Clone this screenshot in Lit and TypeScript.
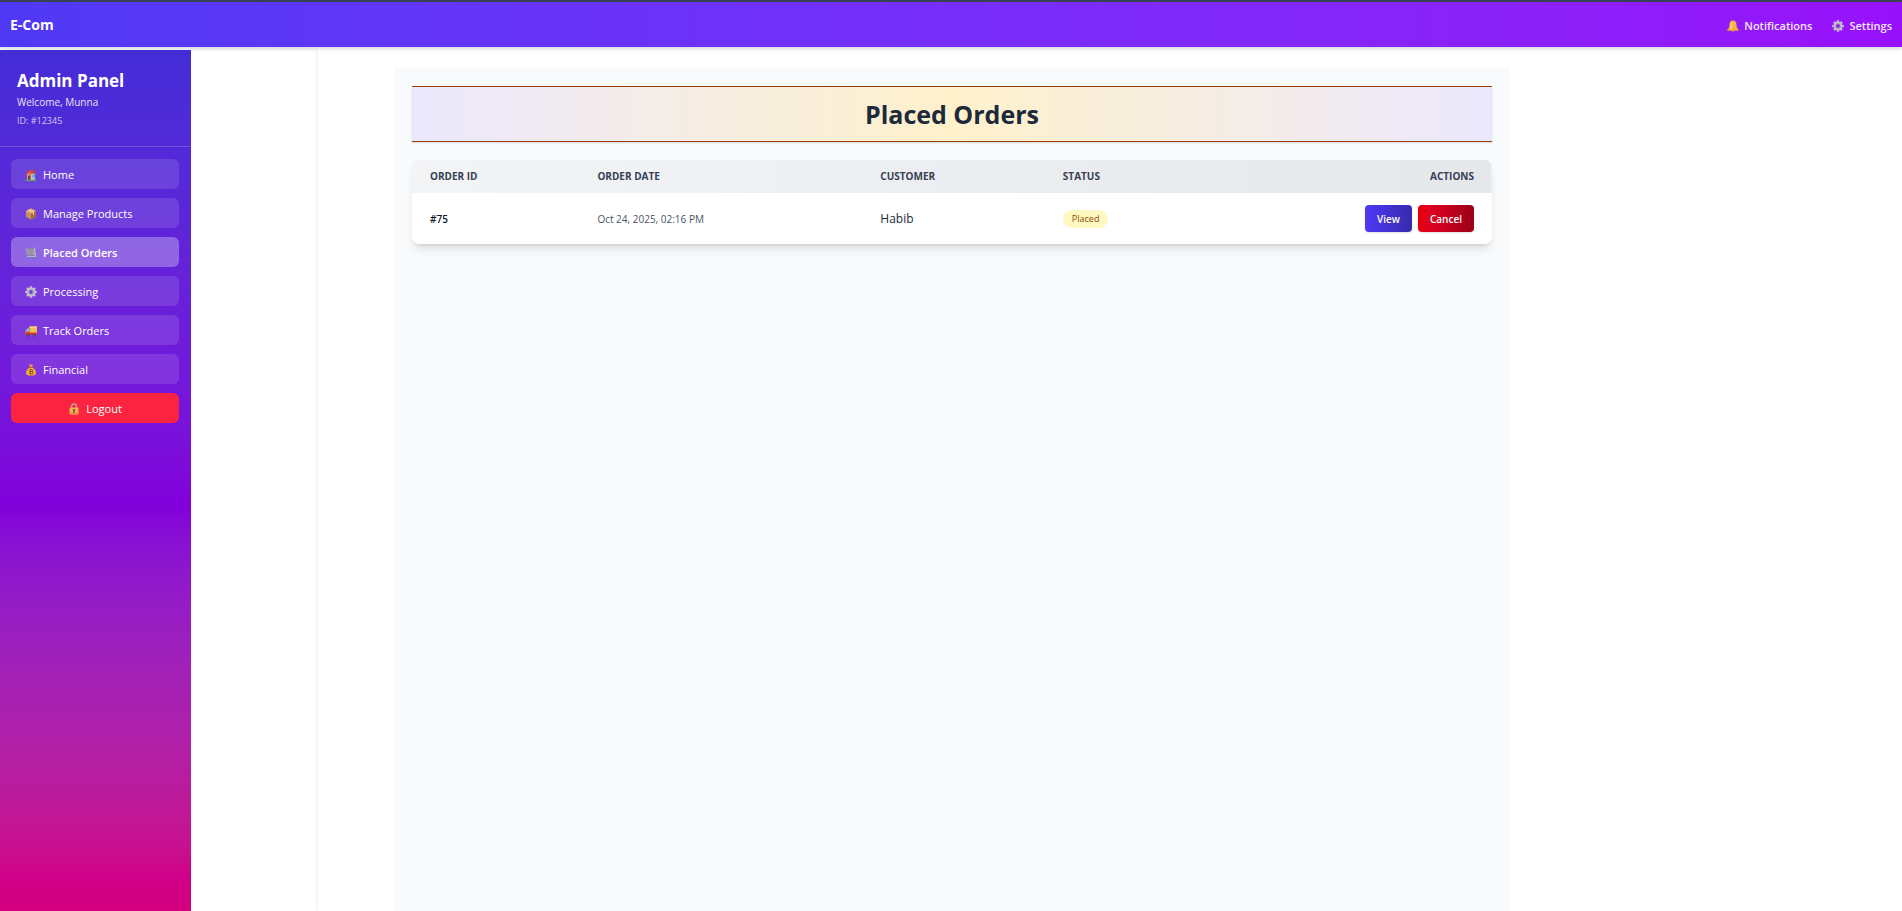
import { LitElement, html, css, svg, TemplateResult } from "lit";
import { customElement, property } from "lit/decorators.js";

const teeth = [0, 45, 90, 135, 180, 225, 270, 315];

const glyphs: Record<string, TemplateResult> = {
  home: svg`
    <rect x="1" y="21" width="22" height="3" fill="#4fb05a"/>
    <path d="M4 11 10 5l6 6v10H4z" fill="#d9a07a"/>
    <path d="M12 9h8v12h-8z" fill="#c9c3cc"/>
    <path d="M1 12 9 2l8 1 6 9-3 1-6-8-2 8-4-6-5 6z" fill="#e8472f"/>
    <rect x="16" y="1" width="3" height="5" fill="#a8472f"/>
    <rect x="6" y="13" width="5" height="8" fill="#7a4032"/>
    <rect x="14" y="11" width="6" height="6" fill="#4fb9e8"/>`,
  box: svg`
    <path d="M12 1 22 6v12l-10 5L2 18V6z" fill="#c98d5f"/>
    <path d="M12 1 22 6 12 11 2 6z" fill="#e6b285"/>
    <path d="M12 11 22 6v12l-10 5z" fill="#a66c45"/>
    <path d="m6 4 10 5v5l2-1V8L8 3z" fill="#f3d3a8"/>`,
  cart: svg`
    <path d="M1 3h18l2 14H4z" fill="#a9a0b4"/>
    <path d="M1 4h19M5 17h16M6 4v12M10 4v12M14 4v12" stroke="#877d97" stroke-width="1.6" fill="none"/>
    <path d="M23 2h-4l2 17H4" stroke="#b9b2c2" stroke-width="2.4" fill="none"/>
    <circle cx="5" cy="22" r="1.8" fill="#4b86d6"/><circle cx="20" cy="22" r="1.8" fill="#4b86d6"/>
    <circle cx="22" cy="2" r="1.8" fill="#4b86d6"/>`,
  gear: svg`
    ${teeth.map(
      (a) => svg`<rect x="9.5" y="0.5" width="5" height="6" rx="1" fill="#c3bfd0" transform="rotate(${a} 12 12)"/>`,
    )}
    <circle cx="12" cy="12" r="6.2" fill="none" stroke="#c3bfd0" stroke-width="4.6"/>
    <circle cx="12" cy="12" r="4.6" fill="none" stroke="#8f8a9e" stroke-width="1.3"/>`,
  truck: svg`
    <path d="M9 3h15v14H9z" fill="#f2bd4a"/>
    <path d="M9 3h15v3H9z" fill="#f9d477"/>
    <path d="M4 7h6v12H0v-6z" fill="#ef5a3c"/>
    <path d="M4 7h5v6H1z" fill="#6fc4f0"/>
    <path d="M0 15h24v4H0z" fill="#d8412f"/>
    <circle cx="6" cy="20" r="3" fill="#3f3248"/><circle cx="18" cy="20" r="3" fill="#3f3248"/>
    <circle cx="6" cy="20" r="1" fill="#cfc7d8"/><circle cx="18" cy="20" r="1" fill="#cfc7d8"/>`,
  money: svg`
    <path d="M8 1h8l-2 5h-4z" fill="#e9a93a"/>
    <path d="M9 7h6c4 3 7 7 7 11 0 4-3 5-10 5S2 22 2 18C2 14 5 10 9 7z" fill="#f0b040"/>
    <path d="M3 20c2 3 16 3 18 0-1 3-4 3-9 3s-8 0-9-3z" fill="#d17a2e"/>
    <rect x="7" y="5.5" width="10" height="2.4" rx="1.2" fill="#b4652a"/>
    <path d="M10 11v9M10 11h3a2 2 0 0 1 0 4h-3 3.500a2.300 2.300 0 0 1 0 5H10" stroke="#6b4018" stroke-width="1.8" fill="none"/>`,
  lock: svg`
    <path d="M7 11V7a5 5 0 0 1 10 0v4" fill="none" stroke="#b9a6a6" stroke-width="2.6"/>
    <rect x="3" y="9" width="18" height="14" rx="2" fill="#f0b052"/>
    <path d="M3 19h18v2a2 2 0 0 1-2 2H5a2 2 0 0 1-2-2z" fill="#e8894a"/>
    <circle cx="12" cy="14" r="2" fill="#5b3a3a"/><path d="M11 14h2v6h-2z" fill="#5b3a3a"/>`,
  bell: svg`
    <circle cx="12" cy="21" r="2.6" fill="#d9822f"/>
    <path d="M12 1c5 0 7 4 7 8 0 5 1 7 4 10v2H1v-2c3-3 4-5 4-10 0-4 2-8 7-8z" fill="#f7b53f"/>
    <path d="M11 3C8 4 7 7 7 11c0 3-1 6-2 8h5z" fill="#fcd36c"/>
    <path d="M1 19h22v2H1z" fill="#e8963a"/>`,
};

@customElement("emoji-icon")
class EmojiIcon extends LitElement {
  @property() name = "home";
  static styles = css`
    :host { display: inline-flex; flex: none; }
    svg { width: 12px; height: 12px; display: block; }
  `;
  render() {
    return html`<svg viewBox="0 0 24 24" aria-hidden="true">${glyphs[this.name]}</svg>`;
  }
}

const links = [
  { icon: "home", label: "Home" },
  { icon: "box", label: "Manage Products" },
  { icon: "cart", label: "Placed Orders", active: true },
  { icon: "gear", label: "Processing" },
  { icon: "truck", label: "Track Orders" },
  { icon: "money", label: "Financial" },
];

const orders = [{ id: "#75", date: "Oct 24, 2025, 02:16 PM", customer: "Habib", status: "Placed" }];

@customElement("app-root")
class AppRoot extends LitElement {
  static styles = css`
    :host {
      display: flex;
      flex-direction: column;
      min-height: 100vh;
      background: #fff;
      color: #1e2939;
      font-family: "Segoe UI", "Open Sans", "Noto Sans", sans-serif;
      font-size: 11px;
      line-height: 18px;
    }
    * { box-sizing: border-box; }
    a { color: inherit; text-decoration: none; }
    button { font: inherit; border: 0; cursor: pointer; color: #fff; }

    .topbar {
      display: flex;
      align-items: center;
      justify-content: space-between;
      height: 47px;
      padding: 0 10px;
      border-top: 2px solid #364153;
      background: linear-gradient(to right in oklab, #4f39f6, #9810fa) padding-box;
      box-shadow: 0 2px 4px rgb(0 0 0 / 0.16);
      color: #fff;
    }
    .brand { font-size: 14px; font-weight: 700; }
    .topnav { display: flex; gap: 20px; padding-top: 2px; }
    .topnav a { display: flex; align-items: center; gap: 5px; font-weight: 600; color: #f3e8ff; }

    .body { display: flex; flex: 1; padding-top: 3px; }

    .sidebar {
      flex: none;
      width: 191px;
      color: #fff;
      background: linear-gradient(
        to bottom in oklab,
        #432dd7, #8200db 50%, #b81c9f 80%, #d00088 91%, #d6007f 95%, #e60076
      ) 0 0 / 100% 100vh;
    }
    .profile {
      padding: 20px 17px;
      height: 97px;
      border-bottom: 1px solid rgb(255 255 255 / 0.2);
    }
    .profile h2 { margin: 0; font-size: 17px; line-height: 22px; font-weight: 700; }
    .profile p { margin: 0; font-size: 10px; line-height: 20px; color: #e9e4fb; }
    .profile .uid { font-size: 9px; line-height: 18px; color: #cfc7f3; }

    .menu { display: flex; flex-direction: column; gap: 9px; padding: 12px 12px 12px 11px; }
    .item {
      display: flex;
      align-items: center;
      gap: 6px;
      width: 100%;
      height: 30px;
      padding: 2px 14px 0;
      border-radius: 6px;
      font-weight: 500;
      background: rgb(255 255 255 / 0.12);
    }
    .item.active { background: rgb(255 255 255 / 0.3); font-weight: 600; }
    .item.logout { justify-content: center; background: #fb2340; }

    .pane { flex: none; width: 125px; box-shadow: 1px 0 2px rgb(0 0 0 / 0.08); }

    .content {
      flex: 1;
      max-width: 1116px;
      margin: 18px 18px 0 78px;
      padding: 18px;
      background: #f9fafb;
    }
    .banner {
      margin: 0 0 18px;
      padding: 9px;
      border: solid #973c00;
      border-width: 1px 0;
      background: linear-gradient(to right, #ebe8fe, #fef1cb, #ebe8fe);
      box-shadow: 0 1px 2px rgb(0 0 0 / 0.12);
      text-align: center;
      font-size: 25px;
      line-height: 36px;
      font-weight: 700;
    }
    .card {
      overflow: hidden;
      border-radius: 7px;
      background: #fff;
      box-shadow: 0 7px 10px -2px rgb(0 0 0 / 0.1), 0 3px 5px -3px rgb(0 0 0 / 0.14);
    }
    table { width: 100%; border-collapse: collapse; table-layout: fixed; text-align: left; }
    thead tr { height: 33px; background: linear-gradient(to right, #f3f4f6, #e5e7eb); }
    tbody tr { height: 51px; }
    th, td { padding: 0 18px; vertical-align: middle; }
    th { font-size: 10px; line-height: 16px; font-weight: 700; text-transform: uppercase; color: #364153; }
    thead th { padding-bottom: 1px; }
    .c-id { width: 15.5%; }
    .c-date { width: 26.2%; }
    .c-customer { width: 16.9%; }
    .right { text-align: right; }
    .id { font-size: 10px; font-weight: 600; color: #101828; }
    .date { font-size: 10px; color: #4a5565; }
    .customer { font-size: 12px; font-weight: 500; }
    .badge {
      display: inline-block;
      padding: 0 9px;
      border-radius: 9px;
      background: #fef9c2;
      color: #894b00;
      font-size: 9px;
      font-weight: 500;
    }
    .actions { display: flex; justify-content: flex-end; gap: 6px; }
    .btn {
      height: 27px;
      padding: 0 12px;
      border-radius: 4px;
      font-size: 10px;
      font-weight: 600;
      box-shadow: 0 1px 2px rgb(0 0 0 / 0.12);
    }
    .view { background: linear-gradient(to right, #4f39f6, #372aac); }
    .cancel { background: linear-gradient(to right, #e7000b, #e00020 20%, #9b0018); }
  `;

  render() {
    return html`
      <header class="topbar">
        <a class="brand" href="#">E-Com</a>
        <nav class="topnav">
          <a href="#notifications"><emoji-icon name="bell"></emoji-icon>Notifications</a>
          <a href="#settings"><emoji-icon name="gear"></emoji-icon>Settings</a>
        </nav>
      </header>
      <div class="body">
        <aside class="sidebar">
          <div class="profile">
            <h2>Admin Panel</h2>
            <p>Welcome, Munna</p>
            <p class="uid">ID: #12345</p>
          </div>
          <nav class="menu">
            ${links.map(
              (l) => html`<a class="item ${l.active ? "active" : ""}" href="#"
                ><emoji-icon name=${l.icon}></emoji-icon>${l.label}</a
              >`,
            )}
            <button class="item logout"><emoji-icon name="lock"></emoji-icon>Logout</button>
          </nav>
        </aside>
        <div class="pane"></div>
        <main class="content">
          <h1 class="banner">Placed Orders</h1>
          <div class="card">
            <table>
              <thead>
                <tr>
                  <th class="c-id">Order ID</th>
                  <th class="c-date">Order Date</th>
                  <th class="c-customer">Customer</th>
                  <th>Status</th>
                  <th class="right">Actions</th>
                </tr>
              </thead>
              <tbody>
                ${orders.map(
                  (o) => html`<tr>
                    <td class="id">${o.id}</td>
                    <td class="date">${o.date}</td>
                    <td class="customer">${o.customer}</td>
                    <td><span class="badge">${o.status}</span></td>
                    <td>
                      <div class="actions">
                        <button class="btn view">View</button>
                        <button class="btn cancel">Cancel</button>
                      </div>
                    </td>
                  </tr>`,
                )}
              </tbody>
            </table>
          </div>
        </main>
      </div>
    `;
  }
}
